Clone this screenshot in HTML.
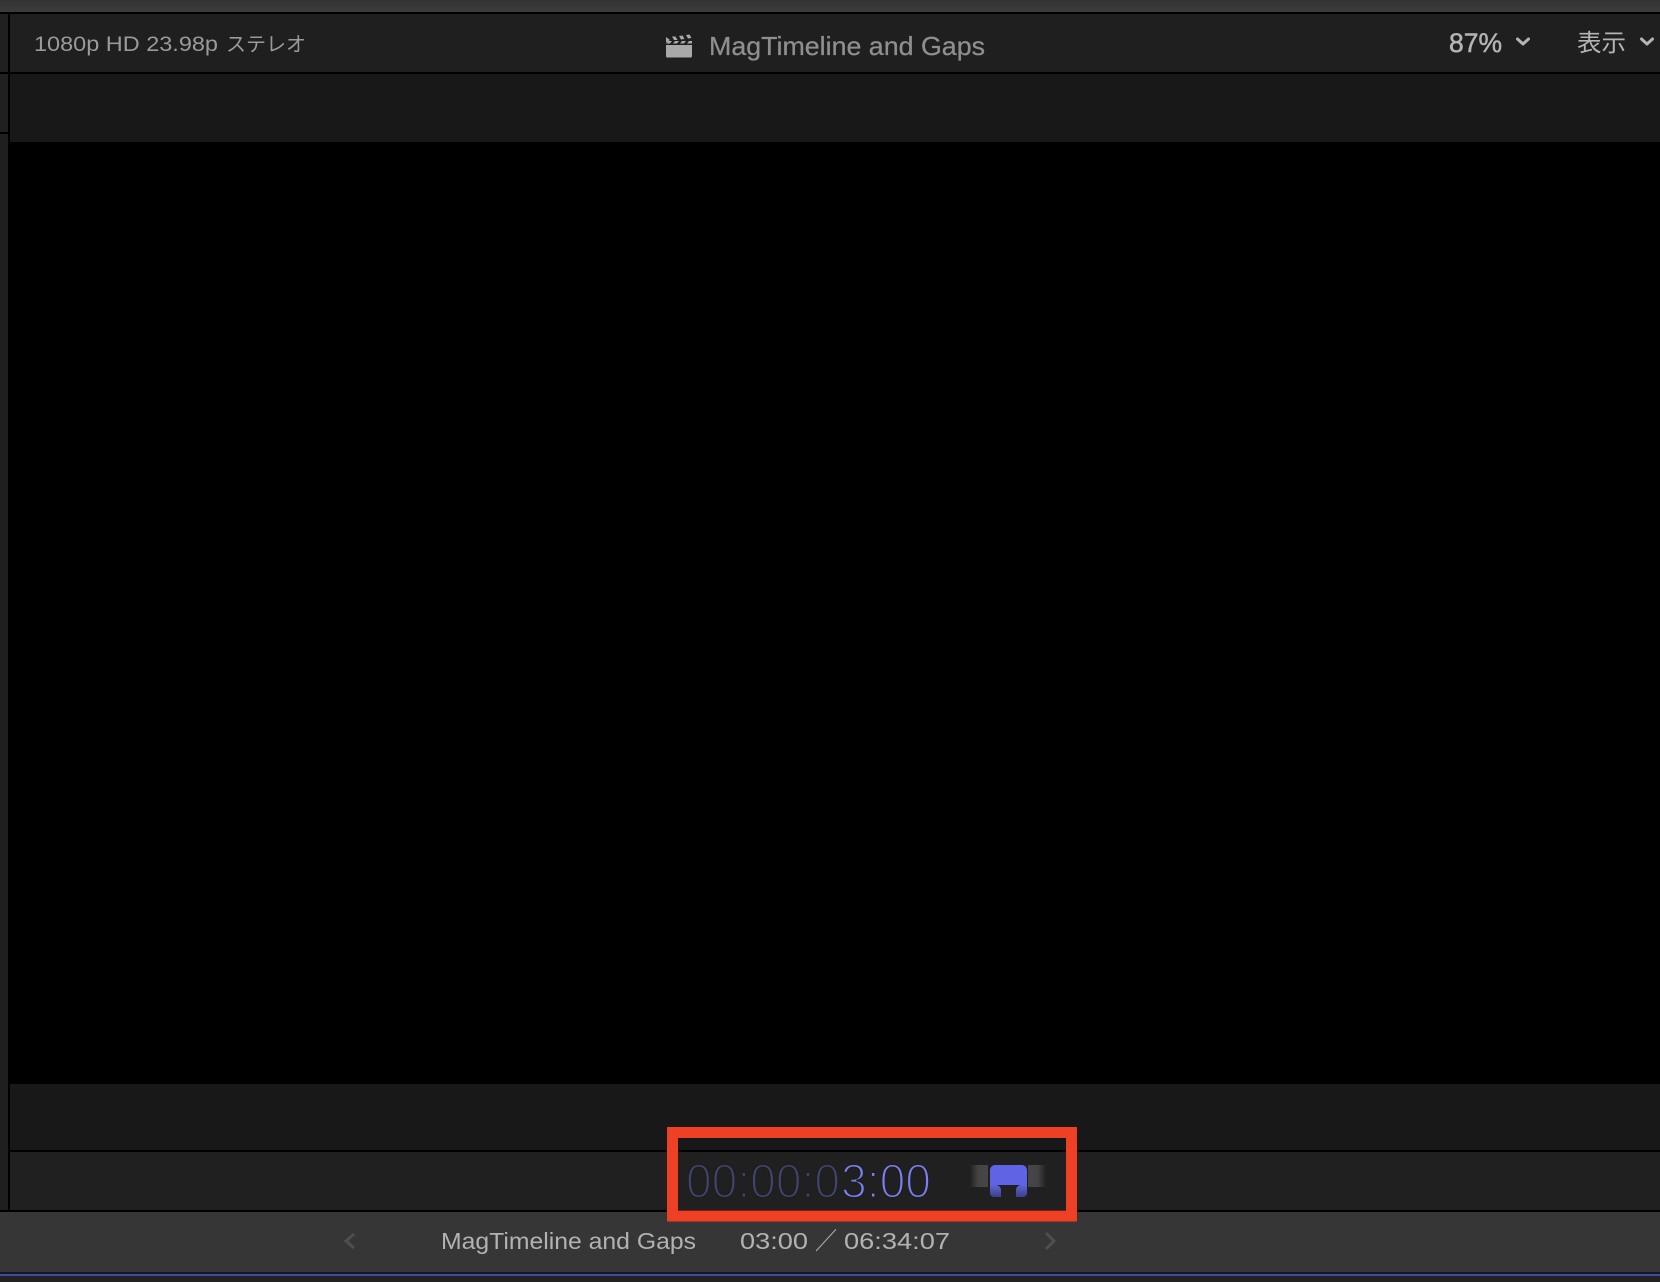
<!DOCTYPE html>
<html lang="ja"><head><meta charset="utf-8"><title>MagTimeline and Gaps</title>
<style>html,body{margin:0;padding:0;background:#000}svg{display:block}text{font-family:"Liberation Sans","Noto Sans CJK JP",sans-serif}</style></head>
<body>
<svg width="1660" height="1282" viewBox="0 0 1660 1282" xmlns="http://www.w3.org/2000/svg">
<defs>
<linearGradient id="t" x1="0" y1="0" x2="0" y2="1"><stop offset="0" stop-color="#333"/><stop offset="1" stop-color="#3b3b3b"/></linearGradient>
<linearGradient id="gl" x1="0" x2="1"><stop offset="0" stop-color="#202020"/><stop offset=".45" stop-color="#444"/><stop offset="1" stop-color="#464646"/></linearGradient>
<linearGradient id="gr" x1="1" x2="0"><stop offset="0" stop-color="#202020"/><stop offset=".45" stop-color="#444"/><stop offset="1" stop-color="#464646"/></linearGradient>
<linearGradient id="bl" x1="0" y1="0" x2="0" y2="1"><stop offset="0" stop-color="#6065d8"/><stop offset="1" stop-color="#3c3f88"/></linearGradient>
</defs>
<rect width="1660" height="1282" fill="#000"/>
<rect width="1660" height="12" fill="url(#t)"/>
<rect y="14" width="8" height="58" fill="#202020"/><rect x="10" y="14" width="1650" height="58" fill="#1f1f1f"/>
<rect y="74" width="8" height="58" fill="#202020"/><rect y="134" width="8" height="1076" fill="#1f1f1f"/>
<rect x="10" y="74" width="1650" height="68" fill="#181818"/>
<rect x="10" y="1084" width="1650" height="66" fill="#181818"/>
<rect x="10" y="1152" width="1650" height="58" fill="#202020"/>
<rect y="1212" width="1660" height="60" fill="#363636"/>
<rect y="1272" width="1660" height="2" fill="#14142c"/>
<rect y="1274" width="1660" height="2" fill="#474a96"/>
<rect y="1276" width="1660" height="6" fill="#222"/>

<text x="34" y="51" font-size="21" fill="#9a9a9a" textLength="184" lengthAdjust="spacingAndGlyphs">1080p HD 23.98p</text>
<text x="226" y="51" font-size="20" fill="#9a9a9a" textLength="80" lengthAdjust="spacingAndGlyphs">ステレオ</text>
<g fill="#a9a9a9">
<path d="M666 45h26v11a1.500 1.500 0 0 1-1.500 1.500h-23a1.500 1.500 0 0 1-1.500-1.500z"/>
<path d="M666 37l4 3-4 2.500zM672 36.500l3.500 0 2 3.500-3.500 0zM679 36l3.500-.5 2 3.500-3.500.5zM686 35l3.500-.5 2 3.500-3.500.5z"/>
<path d="M666 43.500h4l2-2.500h-4zM673 43.500h4l2-2.500h-4zM680 43.500h4l2-2.500h-4zM687 43.500h5v-2.500h-3z"/>
</g>
<text x="709" y="55" font-size="26" fill="#8f8f8f" stroke="#8f8f8f" stroke-width=".25" textLength="276" lengthAdjust="spacingAndGlyphs">MagTimeline and Gaps</text>
<text x="1449" y="52" font-size="27" fill="#b4b4b4" stroke="#b4b4b4" stroke-width=".5" textLength="53" lengthAdjust="spacingAndGlyphs">87%</text>
<path d="M1517.500 39l5.500 5 5.500-5" fill="none" stroke="#b4b4b4" stroke-width="3" stroke-linecap="round" stroke-linejoin="round"/>
<text x="1577" y="51" font-size="24" fill="#b4b4b4" textLength="49" lengthAdjust="spacingAndGlyphs">表示</text>
<path d="M1641.500 39l5.500 5 5.500-5" fill="none" stroke="#b4b4b4" stroke-width="3" stroke-linecap="round" stroke-linejoin="round"/>

<g font-size="48" stroke="#1f1f1f" stroke-width="2">
<text x="686" y="1197.500" fill="#42446f" textLength="154" lengthAdjust="spacingAndGlyphs">00:00:0</text>
<text x="841" y="1197.500" fill="#7a80f4" textLength="90" lengthAdjust="spacingAndGlyphs">3:00</text>
</g>
<rect x="970" y="1165" width="18" height="22" fill="url(#gl)"/>
<rect x="1028" y="1165" width="18" height="22" fill="url(#gr)"/>
<path d="M990 1170a5 5 0 0 1 5-5h27a5 5 0 0 1 5 5v15h-37z" fill="#5f64e6"/>
<path d="M990 1185v8a4 4 0 0 0 4 4h7v-7a5 5 0 0 0-5-5zM1027 1185v8a4 4 0 0 1-4 4h-7v-7a5 5 0 0 1 5-5z" fill="url(#bl)"/>
<path d="M672.500 1132.500h399v83.500h-399z" fill="none" stroke="#ee4024" stroke-width="11"/>

<text x="441" y="1249" font-size="23.500" fill="#b2b2b2" textLength="255" lengthAdjust="spacingAndGlyphs">MagTimeline and Gaps</text>
<text x="740" y="1249" font-size="23.500" fill="#b2b2b2" textLength="68" lengthAdjust="spacingAndGlyphs">03:00</text>
<text x="815" y="1249" font-size="24" fill="#b2b2b2" textLength="22" lengthAdjust="spacingAndGlyphs">／</text>
<text x="844" y="1249" font-size="23.500" fill="#b2b2b2" textLength="106" lengthAdjust="spacingAndGlyphs">06:34:07</text>
<path d="M354 1234l-8 7 8 7" fill="none" stroke="#4e4e4e" stroke-width="3"/>
<path d="M1046 1233l8 8-8 8" fill="none" stroke="#4e4e4e" stroke-width="3"/>
</svg>
</body></html>
